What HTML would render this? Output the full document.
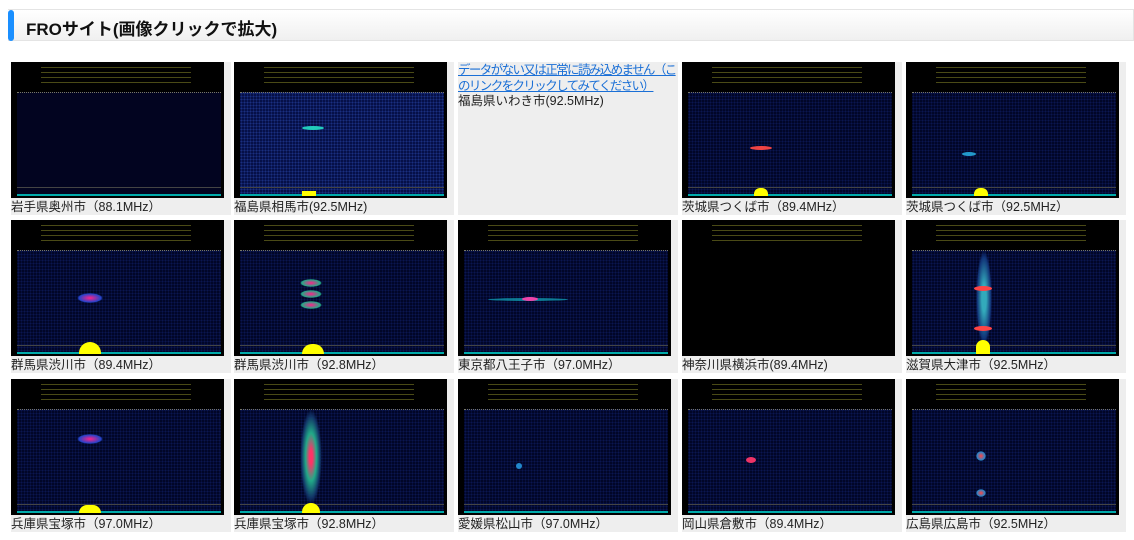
<!DOCTYPE html>
<html><head><meta charset="utf-8"><style>
body{margin:0;width:1134px;height:540px;background:#fff;font-family:"Liberation Sans","Noto Sans CJK JP",sans-serif;overflow:hidden;position:relative}
.hd{position:absolute;left:8px;top:9px;width:1126px;height:32px;background:linear-gradient(#fff,#f0f0f0);border:1px solid #e4e4e4;border-left:none;box-sizing:border-box}
.hd:before{content:"";position:absolute;left:0;top:0;width:6px;height:31px;background:#1a8fff;border-radius:3px}
.hd b{position:absolute;left:18px;top:5px;font-size:17px;color:#111}
.c{position:absolute;width:220px;height:153px;background:#eee}
.im{position:absolute;left:0;top:0;width:213px;height:136px;background:#000;overflow:hidden}
.pl{position:absolute;left:6px;right:3px;top:30px;bottom:3px;background:radial-gradient(#0a1650 1px,transparent 1px) 0 0/3px 3px,#010628}
.ax{position:absolute;left:6px;right:3px;top:30px;height:4px;border-top:1px dotted #776}
.tx{position:absolute;left:30px;top:4px;width:150px;height:18px;background:repeating-linear-gradient(#000 0 1px,#6a6a20 1px 2px,#000 2px 5px);opacity:.7}
.bot{position:absolute;left:6px;right:3px;bottom:2px;height:8px;border-top:1px solid #444;background:linear-gradient(transparent 6px,#0aa 6px)}
.bl{position:absolute;border-radius:50%}
.lb{position:absolute;left:0;top:137px;font-size:12.5px;line-height:16px;color:#222;white-space:nowrap}
a{color:#1a6fd6}
</style></head><body>
<div class="hd"><b>FROサイト(画像クリックで拡大)</b></div>

<!-- row1 -->
<div class="c" style="left:11px;top:62px"><div class="im"><div class="tx"></div><div class="pl" style="background:#020420"></div><div class="ax"></div><div class="bot"></div></div><div class="lb">岩手県奥州市（88.1MHz）</div></div>
<div class="c" style="left:234px;top:62px"><div class="im"><div class="tx"></div><div class="pl" style="background:radial-gradient(#1a2f80 1px,transparent 1px) 0 0/3px 3px,#061048"></div><div class="ax"></div><div class="bot"></div><div class="bl" style="left:68px;top:64px;width:22px;height:4px;background:#2cb"></div><div class="bl" style="left:68px;bottom:2px;width:14px;height:5px;background:#ff0;border-radius:0"></div></div><div class="lb">福島県相馬市(92.5MHz)</div></div>
<div class="c" style="left:458px;top:62px"><div style="font-size:12.5px;line-height:15.5px;padding-top:1px;letter-spacing:-1.6px;white-space:nowrap"><a href="#">データがない又は正常に読み込めません（こ<br>のリンクをクリックしてみてください）</a><br><span style="color:#222;letter-spacing:0">福島県いわき市(92.5MHz)</span></div></div>
<div class="c" style="left:682px;top:62px"><div class="im"><div class="tx"></div><div class="pl"></div><div class="ax"></div><div class="bot"></div><div class="bl" style="left:68px;top:84px;width:22px;height:4px;background:#e44"></div><div class="bl" style="left:72px;bottom:2px;width:14px;height:8px;background:#ff0;border-radius:6px 6px 0 0"></div></div><div class="lb">茨城県つくば市（89.4MHz）</div></div>
<div class="c" style="left:906px;top:62px"><div class="im"><div class="tx"></div><div class="pl"></div><div class="ax"></div><div class="bot"></div><div class="bl" style="left:56px;top:90px;width:14px;height:4px;background:#29c"></div><div class="bl" style="left:68px;bottom:2px;width:14px;height:8px;background:#ff0;border-radius:6px 6px 0 0"></div></div><div class="lb">茨城県つくば市（92.5MHz）</div></div>

<!-- row2 -->
<div class="c" style="left:11px;top:220px"><div class="im"><div class="tx"></div><div class="pl"></div><div class="ax"></div><div class="bot"></div><div class="bl" style="left:66px;top:73px;width:26px;height:10px;background:radial-gradient(#f28,#24c 60%,transparent 70%)"></div><div class="bl" style="left:68px;bottom:2px;width:22px;height:12px;background:#ff0;border-radius:11px 11px 0 0"></div></div><div class="lb">群馬県渋川市（89.4MHz）</div></div>
<div class="c" style="left:234px;top:220px"><div class="im"><div class="tx"></div><div class="pl"></div><div class="ax"></div><div class="bot"></div><div class="bl" style="left:66px;top:59px;width:22px;height:8px;background:radial-gradient(#f28,#2a8 60%,transparent 70%)"></div><div class="bl" style="left:66px;top:70px;width:22px;height:8px;background:radial-gradient(#f28,#2a8 60%,transparent 70%)"></div><div class="bl" style="left:66px;top:81px;width:22px;height:8px;background:radial-gradient(#f28,#2a8 60%,transparent 70%)"></div><div class="bl" style="left:68px;bottom:2px;width:22px;height:10px;background:#ff0;border-radius:11px 11px 0 0"></div></div><div class="lb">群馬県渋川市（92.8MHz）</div></div>
<div class="c" style="left:458px;top:220px"><div class="im"><div class="tx"></div><div class="pl"></div><div class="ax"></div><div class="bot"></div><div class="bl" style="left:30px;top:78px;width:80px;height:3px;background:#1ab;opacity:.7"></div><div class="bl" style="left:64px;top:77px;width:16px;height:4px;background:#e4a"></div></div><div class="lb">東京都八王子市（97.0MHz）</div></div>
<div class="c" style="left:682px;top:220px"><div class="im"><div class="tx"></div><div class="pl" style="background:#000"></div></div><div class="lb">神奈川県横浜市(89.4MHz)</div></div>
<div class="c" style="left:906px;top:220px"><div class="im"><div class="tx"></div><div class="pl"></div><div class="ax"></div><div class="bot"></div><div class="bl" style="left:70px;top:30px;width:16px;height:96px;background:radial-gradient(ellipse,#3ab 20%,#137 60%,transparent 70%)"></div><div class="bl" style="left:68px;top:66px;width:18px;height:5px;background:#f44"></div><div class="bl" style="left:68px;top:106px;width:18px;height:5px;background:#f44"></div><div class="bl" style="left:70px;bottom:2px;width:14px;height:14px;background:#ff0;border-radius:7px 7px 0 0"></div></div><div class="lb">滋賀県大津市（92.5MHz）</div></div>

<!-- row3 -->
<div class="c" style="left:11px;top:379px"><div class="im"><div class="tx"></div><div class="pl"></div><div class="ax"></div><div class="bot"></div><div class="bl" style="left:66px;top:55px;width:26px;height:10px;background:radial-gradient(#f28,#24c 60%,transparent 70%)"></div><div class="bl" style="left:68px;bottom:2px;width:22px;height:8px;background:#ff0;border-radius:11px 11px 0 0"></div></div><div class="lb">兵庫県宝塚市（97.0MHz）</div></div>
<div class="c" style="left:234px;top:379px"><div class="im"><div class="tx"></div><div class="pl"></div><div class="ax"></div><div class="bot"></div><div class="bl" style="left:66px;top:30px;width:22px;height:96px;background:radial-gradient(ellipse,#f36 10%,#2a8 35%,#136 60%,transparent 70%)"></div><div class="bl" style="left:68px;bottom:2px;width:18px;height:10px;background:#ff0;border-radius:9px 9px 0 0"></div></div><div class="lb">兵庫県宝塚市（92.8MHz）</div></div>
<div class="c" style="left:458px;top:379px"><div class="im"><div class="tx"></div><div class="pl"></div><div class="ax"></div><div class="bot"></div><div class="bl" style="left:58px;top:84px;width:6px;height:6px;background:#28c"></div></div><div class="lb">愛媛県松山市（97.0MHz）</div></div>
<div class="c" style="left:682px;top:379px"><div class="im"><div class="tx"></div><div class="pl"></div><div class="ax"></div><div class="bot"></div><div class="bl" style="left:64px;top:78px;width:10px;height:6px;background:#e36"></div></div><div class="lb">岡山県倉敷市（89.4MHz）</div></div>
<div class="c" style="left:906px;top:379px"><div class="im"><div class="tx"></div><div class="pl"></div><div class="ax"></div><div class="bot"></div><div class="bl" style="left:70px;top:72px;width:10px;height:10px;background:radial-gradient(#f44,#28c 60%,transparent 70%)"></div><div class="bl" style="left:70px;top:110px;width:10px;height:8px;background:radial-gradient(#f44,#28c 60%,transparent 70%)"></div></div><div class="lb">広島県広島市（92.5MHz）</div></div>
</body></html>
